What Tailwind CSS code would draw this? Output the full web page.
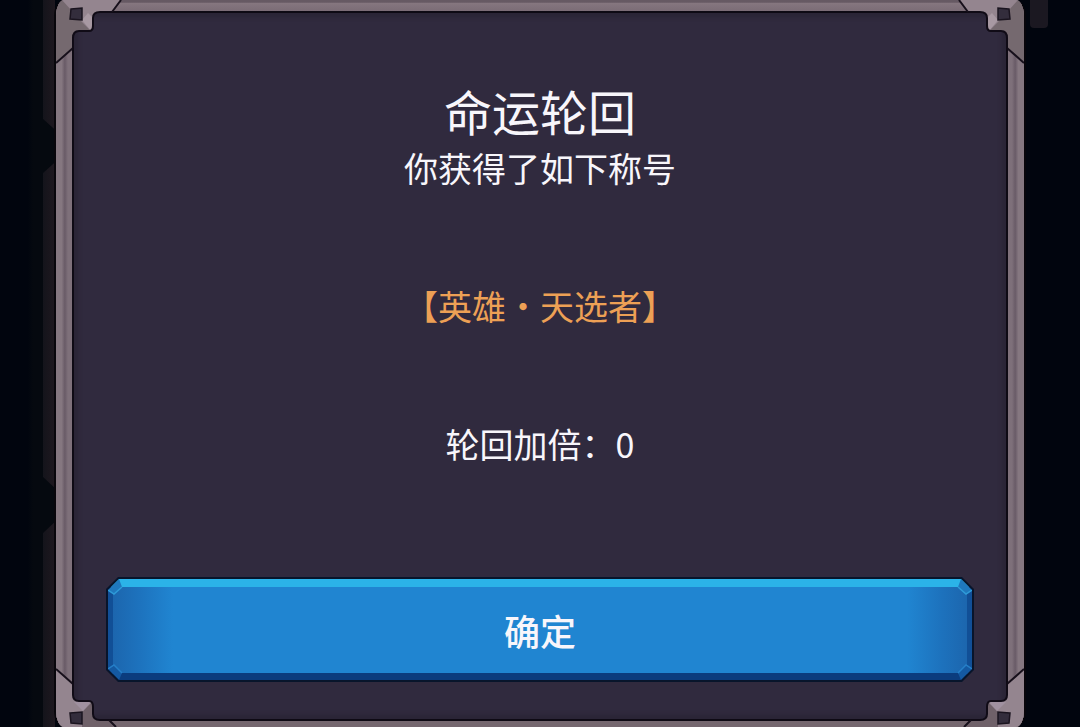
<!doctype html>
<html lang="zh-CN">
<head>
    <meta charset="utf-8">
    <meta name="viewport" content="width=device-width,initial-scale=1">
    <script src="https://cdn.jsdelivr.net/npm/@tailwindcss/browser@4"></script>
    <title>命运轮回</title>
</head>
<body class="relative min-h-screen flex overflow-hidden bg-[#01050e] text-[#f8f6fb] font-['Noto_Sans_CJK_SC','Noto_Sans_SC',sans-serif]">

<!-- dimmed game frame behind the dialog -->
<div class="absolute inset-y-0 left-0 w-[55px] bg-linear-to-r from-[#01050e] from-50% to-[#05090f] to-60%">
    <div class="absolute inset-y-0 right-0 w-3 bg-linear-to-r from-[#14141b] to-[#1e181f]"></div>
    <div class="absolute right-0 top-[119px] w-3 h-[54px] bg-[#05090f] [clip-path:polygon(0_0,100%_20%,100%_80%,0_100%)]"></div>
    <div class="absolute right-0 top-[477px] w-3 h-[56px] bg-[#05090f] [clip-path:polygon(0_0,100%_20%,100%_80%,0_100%)]"></div>
</div>
<div class="absolute top-0 right-8 w-[18px] h-7 rounded-b-sm bg-[#1b1821]"></div>

<main class="relative flex-1 flex flex-col min-h-screen mx-[54px] border-x-2 border-[#08060b] [border-radius:10px/16px] bg-[#7b6d77] overflow-hidden">
    <div class="h-[11px] shrink-0 bg-linear-to-b from-[#665963] from-20% via-[#85767f] via-30% to-[#7b6c76]"></div>

    <div class="flex-1 flex bg-[#7b6d77]">
        <div class="w-4 shrink-0 bg-linear-to-r from-[#857780] from-35% via-[#695b67] via-55% to-[#7e707a] to-75%"></div>

        <section class="flex-1 flex flex-col items-center px-8 pt-[67px] pb-[37px] border-2 border-[#0e0a14] bg-[#302a3e] shadow-[inset_0_0_4px_4px_#2a2536] text-center">
            <h1 class="text-[48px] leading-[60px]">命运轮回</h1>
            <p class="mt-1 text-[34px] leading-[48px]">你获得了如下称号</p>
            <p class="mt-[90px] text-[34px] leading-[48px] text-[#eda055]">【英雄・天选者】</p>
            <p class="mt-[90px] text-[34px] leading-[48px]">轮回加倍：0</p>

            <div class="w-full mt-auto p-[2px] bg-[#08152b] [clip-path:polygon(12px_0,calc(100%-12px)_0,100%_12px,100%_calc(100%-12px),calc(100%-12px)_100%,12px_100%,0_calc(100%-12px),0_12px)]">
                <button type="button" class="relative block w-full h-[101px] border-t-8 border-b-[7px] border-x-[5px] border-t-[#2bb3e8] border-b-[#0b3c7e] border-x-[#114f96] bg-[linear-gradient(to_right,#1c66ae,#1d72bd_3%,#2085d1_7%,#2085d1_93%,#1d72bd_97%,#1c66ae)] text-[36px] font-medium leading-[86px] [clip-path:polygon(11px_0,calc(100%-11px)_0,100%_11px,100%_calc(100%-11px),calc(100%-11px)_100%,11px_100%,0_calc(100%-11px),0_11px)]">
                    确定
                    <svg class="absolute -top-2 -left-[5px] w-4 h-4" viewBox="0 0 16 16" aria-hidden="true">
                        <path d="M0 11 11 0 14 8 6 15Z" fill="#1f78bd"/>
                        <path d="M0 11 6 15 14 8" fill="none" stroke="#2e9ad8" stroke-width="1.5"/>
                    </svg>
                    <svg class="absolute -top-2 -right-[5px] w-4 h-4 -scale-x-100" viewBox="0 0 16 16" aria-hidden="true">
                        <path d="M0 11 11 0 14 8 6 15Z" fill="#1f78bd"/>
                        <path d="M0 11 6 15 14 8" fill="none" stroke="#2e9ad8" stroke-width="1.5"/>
                    </svg>
                    <svg class="absolute -bottom-[7px] -left-[5px] w-4 h-4" viewBox="0 0 16 16" aria-hidden="true">
                        <path d="M0 5 11 16 14 9 6 1Z" fill="#1459a2"/>
                        <path d="M0 5 6 1 14 9" fill="none" stroke="#257fc8" stroke-width="1.5"/>
                    </svg>
                    <svg class="absolute -bottom-[7px] -right-[5px] w-4 h-4 -scale-x-100" viewBox="0 0 16 16" aria-hidden="true">
                        <path d="M0 5 11 16 14 9 6 1Z" fill="#1459a2"/>
                        <path d="M0 5 6 1 14 9" fill="none" stroke="#257fc8" stroke-width="1.5"/>
                    </svg>
                </button>
            </div>
        </section>

        <div class="w-4 shrink-0 bg-linear-to-l from-[#857780] from-35% via-[#695b67] via-55% to-[#7e707a] to-75%"></div>
    </div>

    <div class="h-[6px] shrink-0 bg-[#75676f]"></div>

    <!-- corner plates -->
    <svg class="absolute top-0 left-0 w-[68px] h-[68px]" viewBox="0 0 68 68" aria-hidden="true">
        <path d="M0 63V0H65L56 12H44Q37 12 37 18V26Q37 31 33 31H23Q17 31 17 38V48Z" fill="#75696f"/>
        <path d="M6 0H65L56 12H44Q37 12 37 18V26L35 31L26 22Z" fill="#94858f"/>
        <path d="M26 20 35 31 37 18 32 13Z" fill="#a899a3"/>
        <path d="M65 0 56 12M0 63 17 48" fill="none" stroke="#17101b" stroke-width="2"/>
        <path d="M56 12H44Q37 12 37 18V26Q37 31 33 31H23Q17 31 17 38V50" fill="none" stroke="#100b16" stroke-width="2"/>
        <path d="M15 9 26 8V20L14 19Z" fill="#332d3c" stroke="#1a141f" stroke-width="1.5"/>
    </svg>
    <svg class="absolute top-0 right-0 w-[68px] h-[68px] -scale-x-100" viewBox="0 0 68 68" aria-hidden="true">
        <path d="M0 63V0H65L56 12H44Q37 12 37 18V26Q37 31 33 31H23Q17 31 17 38V48Z" fill="#75696f"/>
        <path d="M6 0H65L56 12H44Q37 12 37 18V26L35 31L26 22Z" fill="#94858f"/>
        <path d="M26 20 35 31 37 18 32 13Z" fill="#a899a3"/>
        <path d="M65 0 56 12M0 63 17 48" fill="none" stroke="#17101b" stroke-width="2"/>
        <path d="M56 12H44Q37 12 37 18V26Q37 31 33 31H23Q17 31 17 38V50" fill="none" stroke="#100b16" stroke-width="2"/>
        <path d="M15 9 26 8V20L14 19Z" fill="#332d3c" stroke="#1a141f" stroke-width="1.5"/>
    </svg>
    <svg class="absolute bottom-0 left-0 w-[68px] h-[68px]" viewBox="0 0 68 68" aria-hidden="true">
        <path d="M0 10V68H60L53 61H44Q37 61 37 55V48Q37 42 33 42H23Q17 42 17 36V25Z" fill="#94858f"/>
        <path d="M36 43 26 53V68H60L53 61H44Q37 61 37 55Z" fill="#6f6169"/>
        <path d="M18 43H35L27 52Z" fill="#a091a0"/>
        <path d="M60 68 53 61M0 10 17 25" fill="none" stroke="#17101b" stroke-width="2"/>
        <path d="M53 61H44Q37 61 37 55V48Q37 42 33 42H23Q17 42 17 36V23" fill="none" stroke="#100b16" stroke-width="2"/>
        <path d="M14 54 26 53V65L15 64Z" fill="#332d3c" stroke="#1a141f" stroke-width="1.5"/>
    </svg>
    <svg class="absolute bottom-0 right-0 w-[68px] h-[68px] -scale-x-100" viewBox="0 0 68 68" aria-hidden="true">
        <path d="M0 10V68H60L53 61H44Q37 61 37 55V48Q37 42 33 42H23Q17 42 17 36V25Z" fill="#94858f"/>
        <path d="M36 43 26 53V68H60L53 61H44Q37 61 37 55Z" fill="#6f6169"/>
        <path d="M18 43H35L27 52Z" fill="#a091a0"/>
        <path d="M60 68 53 61M0 10 17 25" fill="none" stroke="#17101b" stroke-width="2"/>
        <path d="M53 61H44Q37 61 37 55V48Q37 42 33 42H23Q17 42 17 36V23" fill="none" stroke="#100b16" stroke-width="2"/>
        <path d="M14 54 26 53V65L15 64Z" fill="#332d3c" stroke="#1a141f" stroke-width="1.5"/>
    </svg>
</main>

</body>
</html>
